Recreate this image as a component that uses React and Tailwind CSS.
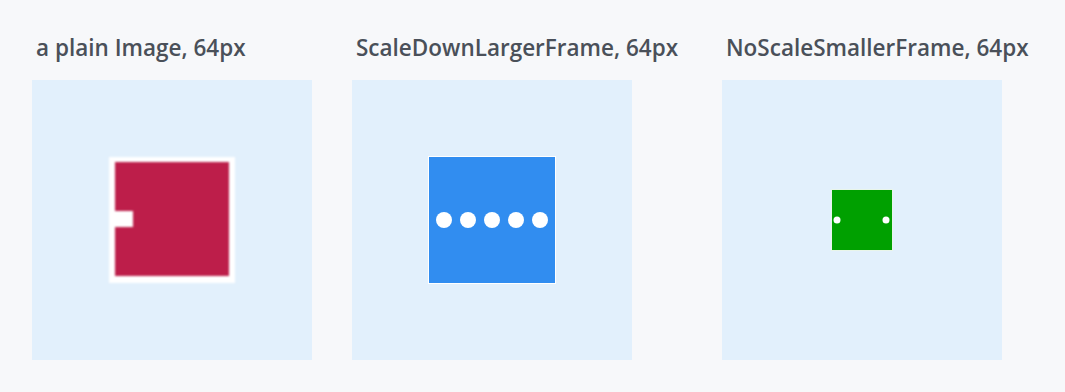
import React from "react";

const Column = ({ title, width, children }) => (
  <div className="flex flex-col shrink-0" style={{ width }}>
    <h2 className="pl-1 text-[22.5px] leading-[28px] font-semibold text-[#4a5059] mb-[18px] whitespace-nowrap">
      {title}
    </h2>
    <div className="w-[280px] h-[280px] bg-[#e2f0fc] flex items-center justify-center">
      {children}
    </div>
  </div>
);

const PlainImage = () => (
  <svg width="128" height="128" viewBox="0 0 128 128" className="blur-[1px]">
    <rect x="1" y="1" width="126" height="126" fill="#ffffff" />
    <rect x="7" y="6" width="114" height="114" fill="#bd1e4a" />
    <rect x="4" y="55" width="21" height="16" fill="#ffffff" />
  </svg>
);

const LargerFrame = () => (
  <svg width="128" height="128" viewBox="0 0 128 128">
    <rect x="0" y="0" width="128" height="128" fill="#ffffff" />
    <rect x="1" y="1" width="126" height="126" fill="#318df0" />
    {[16, 40, 64, 88, 112].map((cx) => (
      <circle key={cx} cx={cx} cy="64" r="8" fill="#ffffff" />
    ))}
  </svg>
);

const SmallerFrame = () => (
  <svg width="62" height="62" viewBox="0 0 62 62">
    <rect x="0" y="0" width="62" height="62" fill="#e9f5e9" />
    <rect x="1" y="1" width="60" height="60" fill="#00a000" />
    <circle cx="6" cy="31" r="3.5" fill="#ffffff" />
    <circle cx="55" cy="31" r="3.5" fill="#ffffff" />
  </svg>
);

export default function App() {
  return (
    <div
      className="w-[1065px] h-[392px] bg-[#f7f8fa] flex gap-10 pl-8 pt-[34px]"
      style={{ fontFamily: '"Open Sans", "Noto Sans", sans-serif' }}
    >
      <Column title="a plain Image, 64px" width={280}>
        <PlainImage />
      </Column>
      <Column title="ScaleDownLargerFrame, 64px" width={330}>
        <LargerFrame />
      </Column>
      <Column title="NoScaleSmallerFrame, 64px" width={280}>
        <SmallerFrame />
      </Column>
    </div>
  );
}
